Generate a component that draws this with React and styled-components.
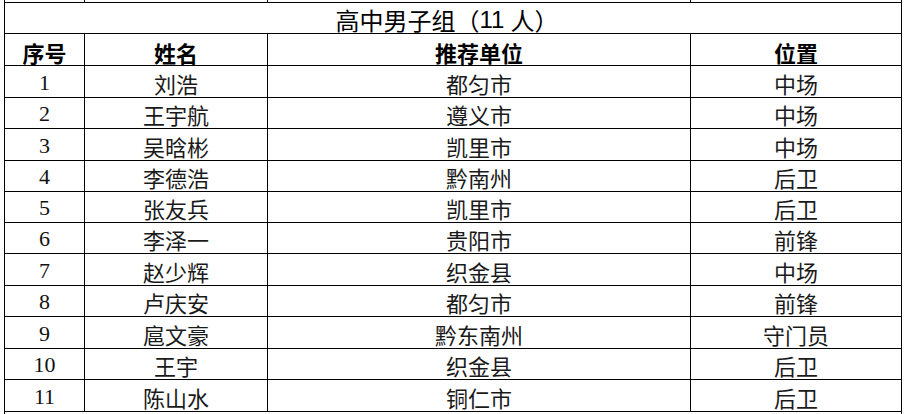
import styled, { createGlobalStyle } from "styled-components";

const GlobalStyle = createGlobalStyle`
  html, body {
    margin: 0;
    padding: 0;
    background: #fff;
  }
  body {
    font-family: "Noto Sans CJK SC", "Liberation Serif", sans-serif;
    color: #000;
  }
`;

const COLUMNS = "80px 183px 423px 211px";

const players = [
  ["1", "刘浩", "都匀市", "中场", 32],
  ["2", "王宇航", "遵义市", "中场", 31],
  ["3", "吴晗彬", "凯里市", "中场", 32],
  ["4", "李德浩", "黔南州", "后卫", 31],
  ["5", "张友兵", "凯里市", "后卫", 31],
  ["6", "李泽一", "贵阳市", "前锋", 31],
  ["7", "赵少辉", "织金县", "中场", 32],
  ["8", "卢庆安", "都匀市", "前锋", 31],
  ["9", "扈文豪", "黔东南州", "守门员", 32],
  ["10", "王宇", "织金县", "后卫", 31],
  ["11", "陈山水", "铜仁市", "后卫", 32],
];

const Sheet = styled.div`
  margin-left: 4px;
  width: 898px;
  box-sizing: border-box;
  border-left: 1px solid #000;
`;

const Row = styled.div`
  display: grid;
  grid-template-columns: ${COLUMNS};
  height: ${(p) => p.$h}px;
  box-sizing: border-box;
  border-bottom: ${(p) => (p.$open ? "none" : "1px solid #000")};
`;

const Cell = styled.div`
  box-sizing: border-box;
  border-right: 1px solid #000;
  display: flex;
  align-items: center;
  justify-content: center;
  padding-top: 2px;
  line-height: 26px;
  font-size: 22px;
  color: #1a1a1a;
  white-space: nowrap;
`;

const NumCell = styled(Cell)`
  font-family: "Liberation Serif", serif;
  color: #111;
`;

const HeadCell = styled(Cell)`
  font-weight: 700;
  color: #000;
  padding-top: 4px;
`;

const TitleCell = styled(Cell)`
  grid-column: 1 / -1;
  font-size: 24px;
  color: #000;
  padding-top: 4px;
  padding-right: 12px;
`;

const Paren = styled.span`
  font-family: "Noto Sans CJK SC", sans-serif;
`;

const Count = styled.span`
  font-family: "Liberation Sans", sans-serif;
  margin-right: 6px;
`;

const App = () => (
  <>
    <GlobalStyle />
    <Sheet>
      <Row $h={3}>
        <Cell />
        <Cell />
        <Cell />
        <Cell />
      </Row>
      <Row $h={31}>
        <TitleCell>
          高中男子组<Paren>（</Paren>
          <Count>11</Count>人<Paren>）</Paren>
        </TitleCell>
      </Row>
      <Row $h={32}>
        <HeadCell>序号</HeadCell>
        <HeadCell>姓名</HeadCell>
        <HeadCell>推荐单位</HeadCell>
        <HeadCell>位置</HeadCell>
      </Row>
      {players.map(([no, name, unit, pos, h]) => (
        <Row key={no} $h={h}>
          <NumCell>{no}</NumCell>
          <Cell>{name}</Cell>
          <Cell>{unit}</Cell>
          <Cell>{pos}</Cell>
        </Row>
      ))}
      <Row $h={3} $open>
        <TitleCell />
      </Row>
    </Sheet>
  </>
);

export default App;
